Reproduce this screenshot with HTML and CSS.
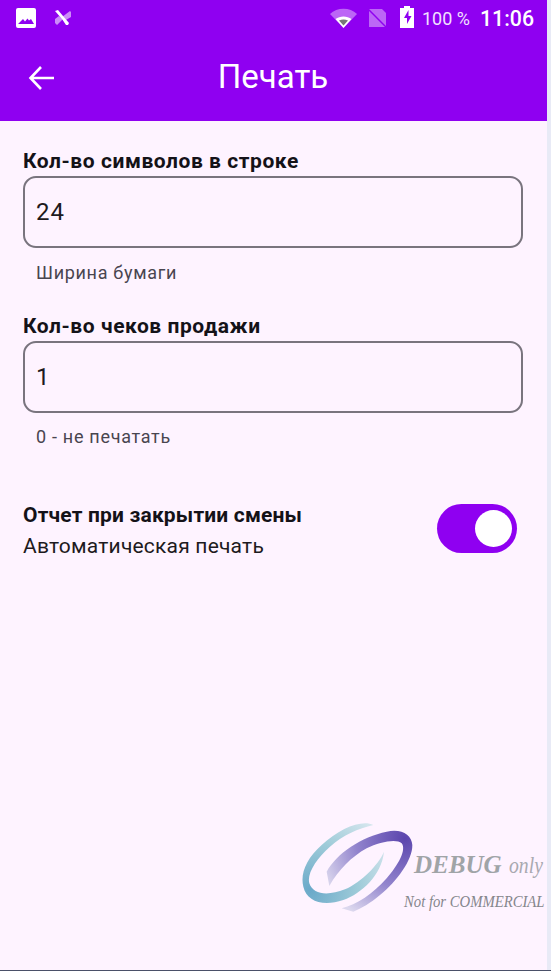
FILE: index.html
```html
<!DOCTYPE html>
<html>
<head>
<meta charset="utf-8">
<title>Печать</title>
<link rel="stylesheet" href="styles.css">
</head>
<body>

<div class="screen">
<header class="top">
  <div class="status">
    <div class="status-left">
      <svg class="ic-image" width="22" height="22" viewBox="0 0 22 22">
        <path fill="#fff" fill-rule="evenodd" d="M3 1h16a2 2 0 0 1 2 2v16a2 2 0 0 1-2 2H3a2 2 0 0 1-2-2V3a2 2 0 0 1 2-2zM3 17h16l-3-5-2 1.500-1.500-2-2.500 3-2-2.500z"/>
      </svg>
      <svg class="ic-fan" width="18" height="16" viewBox="0 0 18 16">
        <path fill="#fff" opacity=".55" d="M8 7l8-6 1 1v5l-5 3zM9 9l-6 6-2-2V9l4-3z"/>
        <path fill="#fff" d="M1 1l3-1 5 6 6 7-1 2h-2L8 9z"/>
      </svg>
    </div>
    <div class="status-right">
      <svg class="ic-wifi" width="27" height="20" viewBox="0 0 27 20">
        <path fill="#fff" opacity=".4" d="M0 6C7-1 20-1 27 6L13.500 20z"/>
        <path fill="#fff" d="M5.500 11c4.500-3.500 11.500-3.500 16 0l-8 9z"/>
        <path fill="#777" d="M9 12.500c3-1.500 6-1.500 9 0l-4.500 5z"/>
      </svg>
      <svg class="ic-sim" width="20" height="20" viewBox="0 0 20 20">
        <path fill="#fff" opacity=".4" d="M2 1h13l4 4v14H2z"/>
        <path stroke="#8f00f1" stroke-width="1.500" d="M0 0l20 20"/>
      </svg>
      <svg class="ic-batt" width="15" height="22" viewBox="0 0 15 22">
        <path fill="#fff" fill-rule="evenodd" d="M4 2V0h6v2h4v20H0V2zM8.500 4L4 12h3v6l4.500-8h-3z"/>
      </svg>
      <span class="batt-pct">100 %</span>
      <span class="clock">11:06</span>
    </div>
  </div>
  <div class="appbar">
    <svg class="ic-back" width="28" height="26" viewBox="0 0 28 26">
      <path fill="none" stroke="#fff" stroke-width="2.600" d="M26 13H3M13 2L2.500 13 13 24"/>
    </svg>
    <h1>Печать</h1>
  </div>
</header>

<main class="content">
  <div class="field">
    <label>Кол-во символов в строке</label>
    <div class="box">24</div>
    <div class="hint">Ширина бумаги</div>
  </div>
  <div class="field">
    <label>Кол-во чеков продажи</label>
    <div class="box">1</div>
    <div class="hint">0 - не печатать</div>
  </div>
  <div class="switch-row">
    <div>
      <div class="switch-title">Отчет при закрытии смены</div>
      <div class="switch-sub">Автоматическая печать</div>
    </div>
    <div class="switch"><div class="knob"></div></div>
  </div>
</main>

<div class="watermark">
  <svg class="wm-logo" width="115" height="95" viewBox="30 30 345 285">
    <defs>
      <radialGradient id="wmBlue" gradientUnits="userSpaceOnUse" cx="60" cy="240" r="270">
        <stop offset="0" stop-color="#6aa9c9"/>
        <stop offset=".55" stop-color="#a0ccd9"/>
        <stop offset="1" stop-color="#d6e6ee"/>
      </radialGradient>
      <radialGradient id="wmPurple" gradientUnits="userSpaceOnUse" cx="345" cy="85" r="270">
        <stop offset="0" stop-color="#5b45ad"/>
        <stop offset=".55" stop-color="#9284cd"/>
        <stop offset="1" stop-color="#dcd8ee"/>
      </radialGradient>
    </defs>
    <path fill="url(#wmBlue)" d="M250 45C215 28 150 55 95 105C50 145 30 190 40 230C50 275 100 290 160 270C215 250 275 195 282 125C265 165 215 215 165 238C115 258 70 255 58 220C50 190 80 145 120 110C160 75 205 55 250 45Z"/>
    <path fill="url(#wmPurple)" d="M110 185C140 130 215 80 290 65C335 55 365 75 367 105C368 150 320 215 270 255C240 280 215 295 190 305L155 295C200 285 250 250 290 205C325 165 350 120 335 100C320 85 270 95 230 115C185 140 145 180 118 228Z"/>
  </svg>
  <div class="wm-text">
    <div class="wm-debug"><b>DEBUG</b> <i>only</i></div>
    <div class="wm-not">Not for COMMERCIAL</div>
  </div>
</div>
</div>

</body>
</html>
```

FILE: styles.css
```css
html, body {
    margin: 0;
    padding: 0;
}

body {
    height: 970px;
    font-family: Roboto, sans-serif;
    background: #e8eaf6;
    border-bottom: 1px solid #4a5068;
}

.screen {
    position: relative;
    display: flex;
    flex-direction: column;
    width: 547px;
    height: 970px;
    background: #fef3ff;
    overflow: hidden;
}

.top {
    background: #8f00f1;
    color: #fff;
}

.status {
    display: flex;
    justify-content: space-between;
    align-items: center;
    height: 36px;
    padding: 0 13px 0 15px;
}

.status-left, .status-right {
    display: flex;
    align-items: center;
}

.ic-fan {margin-left: 17px;}
.ic-sim {margin-left: 10px;}
.ic-batt {margin-left: 13px; margin-bottom: 2px;}

.batt-pct {
    margin-left: 7px;
    margin-right: -1px;
    font-size: 18px;
    color: #f2e0ff;
}

.clock {
    margin-left: 11px;
    font-size: 21.300px;
    font-weight: 500;
}

.appbar {
    display: flex;
    align-items: center;
    justify-content: center;
    position: relative;
    height: 85px;
}

.ic-back {
    position: absolute;
    left: 28px;
    top: 29px;
}

.appbar h1 {
    margin: 0 1px 4px 0;
    font-size: 33px;
    font-weight: 400;
}

.content {
    padding: 27px 24px 0 23px;
    color: #1d1a20;
}

.field {
    margin-bottom: 27px;
}

.field label {
    display: block;
    font-size: 21px;
    font-weight: 700;
    line-height: 27px;
    letter-spacing: .55px;
    color: #141218;
}

.box {
    box-sizing: border-box;
    height: 72px;
    margin-top: 1px;
    padding: 0 11px;
    border: 2px solid #79747e;
    border-radius: 13px;
    font-size: 24px;
    line-height: 68px;
    letter-spacing: .9px;
}

.hint {
    margin-top: 13px;
    padding-left: 13px;
    font-size: 18px;
    line-height: 24px;
    color: #49454f;
    letter-spacing: .7px;
}

.field + .field {
    margin-top: 28px;
}

.field + .field .hint {
    margin-top: 12px;
}

.switch-row {
    display: flex;
    justify-content: space-between;
    align-items: center;
    margin-top: 52px;
}

.switch-title {
    font-size: 21px;
    font-weight: 700;
    line-height: 29px;
    letter-spacing: .17px;
    color: #141218;
}

.switch-sub {
    font-size: 21px;
    line-height: 32px;
    letter-spacing: .2px;
    color: #1d1a20;
}

.switch {
    display: flex;
    justify-content: flex-end;
    align-items: center;
    box-sizing: border-box;
    width: 80px;
    height: 49px;
    margin-top: -6px;
    margin-right: 6px;
    padding-right: 5px;
    background: #8f00f1;
    border-radius: 25px;
}

.knob {
    width: 37px;
    height: 37px;
    background: #fff;
    border-radius: 50%;
}

/* sits over the empty page corner */
.watermark {
    position: absolute;
    left: 300px;
    top: 820px;
    width: 247px;
    height: 100px;
}

.wm-logo {
    position: absolute;
    left: 0;
    top: 0;
}

.wm-text {
    position: absolute;
    left: 104px;
    top: 30px;
    font-family: "Liberation Serif", serif;
    font-style: italic;
    white-space: nowrap;
}

.wm-debug {
    font-size: 25px;
    line-height: 30px;
    color: #a0a4a7;
    margin-left: 10px;
}

.wm-debug i {
    display: inline-block;
    margin-left: 1px;
    font-size: 24px;
    color: #a9a9b0;
    transform: scaleX(.82);
    transform-origin: left;
}

.wm-not {
    margin-top: 12px;
    font-size: 17px;
    line-height: 20px;
    color: #85868c;
    transform: scaleX(.865);
    transform-origin: left;
}
```
